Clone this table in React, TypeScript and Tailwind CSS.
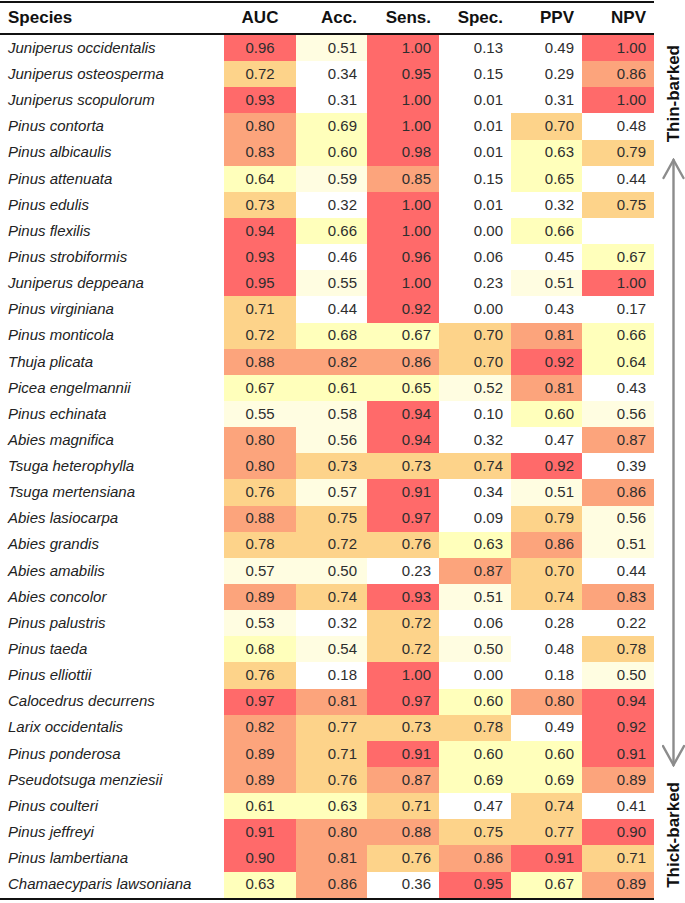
const cols = ["AUC", "Acc.", "Sens.", "Spec.", "PPV", "NPV"];

const rows: [string, (number | null)[]][] = [
  ["Juniperus occidentalis", [0.96, 0.51, 1.0, 0.13, 0.49, 1.0]],
  ["Juniperus osteosperma", [0.72, 0.34, 0.95, 0.15, 0.29, 0.86]],
  ["Juniperus scopulorum", [0.93, 0.31, 1.0, 0.01, 0.31, 1.0]],
  ["Pinus contorta", [0.8, 0.69, 1.0, 0.01, 0.7, 0.48]],
  ["Pinus albicaulis", [0.83, 0.6, 0.98, 0.01, 0.63, 0.79]],
  ["Pinus attenuata", [0.64, 0.59, 0.85, 0.15, 0.65, 0.44]],
  ["Pinus edulis", [0.73, 0.32, 1.0, 0.01, 0.32, 0.75]],
  ["Pinus flexilis", [0.94, 0.66, 1.0, 0.0, 0.66, null]],
  ["Pinus strobiformis", [0.93, 0.46, 0.96, 0.06, 0.45, 0.67]],
  ["Juniperus deppeana", [0.95, 0.55, 1.0, 0.23, 0.51, 1.0]],
  ["Pinus virginiana", [0.71, 0.44, 0.92, 0.0, 0.43, 0.17]],
  ["Pinus monticola", [0.72, 0.68, 0.67, 0.7, 0.81, 0.66]],
  ["Thuja plicata", [0.88, 0.82, 0.86, 0.7, 0.92, 0.64]],
  ["Picea engelmannii", [0.67, 0.61, 0.65, 0.52, 0.81, 0.43]],
  ["Pinus echinata", [0.55, 0.58, 0.94, 0.1, 0.6, 0.56]],
  ["Abies magnifica", [0.8, 0.56, 0.94, 0.32, 0.47, 0.87]],
  ["Tsuga heterophylla", [0.8, 0.73, 0.73, 0.74, 0.92, 0.39]],
  ["Tsuga mertensiana", [0.76, 0.57, 0.91, 0.34, 0.51, 0.86]],
  ["Abies lasiocarpa", [0.88, 0.75, 0.97, 0.09, 0.79, 0.56]],
  ["Abies grandis", [0.78, 0.72, 0.76, 0.63, 0.86, 0.51]],
  ["Abies amabilis", [0.57, 0.5, 0.23, 0.87, 0.7, 0.44]],
  ["Abies concolor", [0.89, 0.74, 0.93, 0.51, 0.74, 0.83]],
  ["Pinus palustris", [0.53, 0.32, 0.72, 0.06, 0.28, 0.22]],
  ["Pinus taeda", [0.68, 0.54, 0.72, 0.5, 0.48, 0.78]],
  ["Pinus elliottii", [0.76, 0.18, 1.0, 0.0, 0.18, 0.5]],
  ["Calocedrus decurrens", [0.97, 0.81, 0.97, 0.6, 0.8, 0.94]],
  ["Larix occidentalis", [0.82, 0.77, 0.73, 0.78, 0.49, 0.92]],
  ["Pinus ponderosa", [0.89, 0.71, 0.91, 0.6, 0.6, 0.91]],
  ["Pseudotsuga menziesii", [0.89, 0.76, 0.87, 0.69, 0.69, 0.89]],
  ["Pinus coulteri", [0.61, 0.63, 0.71, 0.47, 0.74, 0.41]],
  ["Pinus jeffreyi", [0.91, 0.8, 0.88, 0.75, 0.77, 0.9]],
  ["Pinus lambertiana", [0.9, 0.81, 0.76, 0.86, 0.91, 0.71]],
  ["Chamaecyparis lawsoniana", [0.63, 0.86, 0.36, 0.95, 0.67, 0.89]],
];

// heat scale, binned by tenths
function heat(v: number | null) {
  if (v === null) return "bg-white";
  if (v >= 0.9) return "bg-[#ff6a6a]";
  if (v >= 0.8) return "bg-[#fca47c]";
  if (v >= 0.7) return "bg-[#fdd38a]";
  if (v >= 0.6) return "bg-[#ffffbb]";
  if (v >= 0.5) return "bg-[#fffde1]";
  return "bg-white";
}

const align = [
  "justify-center",
  "justify-end pr-[10px]",
  "justify-end pr-2",
  "justify-end pr-2",
  "justify-end pr-2",
  "justify-end pr-2",
];

const grid = "grid grid-cols-[224px_72px_71px_72px_72px_71px_72px]";

function Arrow() {
  return (
    <svg width="23" height="609" viewBox="0 0 23 609" className="block">
      <g stroke="#8c8c8c" strokeWidth="2.4" fill="none" strokeLinecap="round">
        <line x1="11.5" y1="2" x2="11.5" y2="607" />
        <polyline points="1.5,20 11.5,2 21.5,20" />
        <polyline points="1,588 11.5,607 22,588" />
      </g>
    </svg>
  );
}

export default function App() {
  return (
    <div className="w-[685px] h-[903px] bg-white flex items-start font-['Liberation_Sans',Arial,sans-serif]">
      <div className="w-[654px] mt-px border-t-2 border-b-[2.5px] border-[#111]">
        <div className={`${grid} h-[32px] border-b-[2.5px] border-[#111] text-[17px] font-bold text-[#111] items-center`}>
          <div className="pl-2">Species</div>
          {cols.map((c, i) => (
            <div key={c} className={`flex ${align[i]}`}>{c}</div>
          ))}
        </div>
        {rows.map(([name, vals]) => (
          <div key={name} className={`${grid} h-[26.15px] text-[15px]`}>
            <div className="pl-2 flex items-center italic text-[#222]">{name}</div>
            {vals.map((v, i) => (
              <div key={i} className={`flex items-center ${align[i]} ${heat(v)} text-[#2e2e2e]`}>
                {v === null ? "" : v.toFixed(2)}
              </div>
            ))}
          </div>
        ))}
      </div>
      <div className="w-[31px] pl-2 pt-[45px] flex flex-col text-[17px] font-bold text-[#111]">
        <div className="h-[98px] w-[23px] flex items-center justify-center">
          <span className="[writing-mode:vertical-rl] rotate-180 leading-[23px] whitespace-nowrap">Thin-barked</span>
        </div>
        <div className="mt-[15px]">
          <Arrow />
        </div>
        <div className="mt-[15px] h-[106px] w-[23px] flex items-center justify-center">
          <span className="[writing-mode:vertical-rl] rotate-180 leading-[23px] whitespace-nowrap">Thick-barked</span>
        </div>
      </div>
    </div>
  );
}
